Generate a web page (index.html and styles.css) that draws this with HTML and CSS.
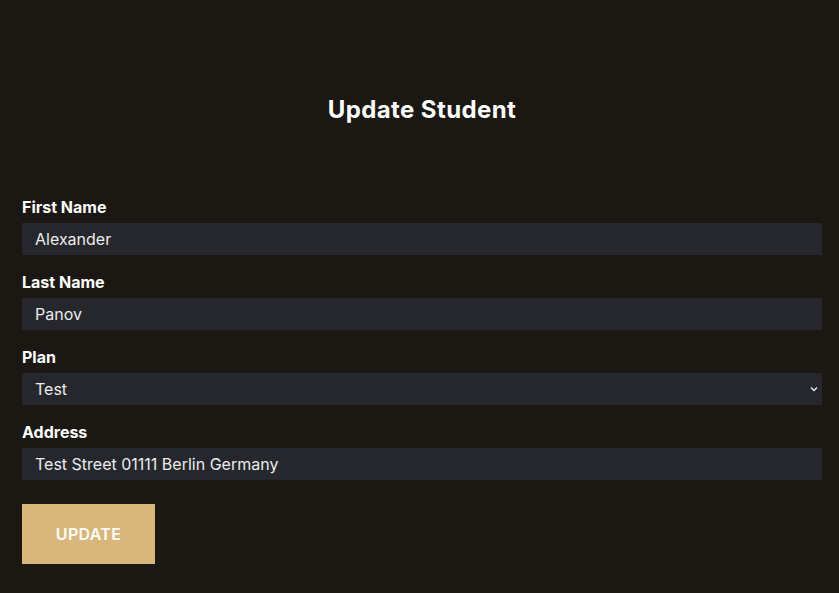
FILE: index.html
```html
<!DOCTYPE html>
<html lang="en">
<head>
<meta charset="utf-8">
<title>Update Student</title>
<link rel="stylesheet" href="styles.css">
</head>
<body>
<main class="page">
  <h1 class="title">Update Student</h1>
  <form class="form">
    <div class="field">
      <label class="label" for="first">First Name</label>
      <input class="input" id="first" type="text" value="Alexander">
    </div>
    <div class="field">
      <label class="label" for="last">Last Name</label>
      <input class="input" id="last" type="text" value="Panov">
    </div>
    <div class="field">
      <label class="label" for="plan">Plan</label>
      <div class="select-wrap">
        <select class="input select" id="plan">
          <option>Test</option>
        </select>
        <svg class="chevron" width="8" height="6" viewBox="0 0 8 6"><path d="M1 1.5 L4 4.5 L7 1.5" fill="none" stroke="#e6e6e6" stroke-width="1.5"/></svg>
      </div>
    </div>
    <div class="field">
      <label class="label" for="addr">Address</label>
      <input class="input" id="addr" type="text" value="Test Street 01111 Berlin Germany">
    </div>
    <button class="btn" type="button">UPDATE</button>
  </form>
</main>
</body>
</html>
```
FILE: styles.css
```css
html, body {
  margin: 0;
  padding: 0;
  background: #1b1814;
}
body {
  font-family: "Inter", "Roboto", "Liberation Sans", sans-serif;
  color: #ffffff;
}
.page {
  padding: 96px 17px 0 22px;
}
.title {
  margin: 0;
  text-align: center;
  font-size: 24px;
  font-weight: 700;
  line-height: 28px;
  letter-spacing: 0.4px;
}
.form {
  margin-top: 72px;
  display: flex;
  flex-direction: column;
}
.field {
  display: flex;
  flex-direction: column;
  margin-bottom: 16px;
}
.label {
  font-size: 16px;
  font-weight: 700;
  line-height: 22px;
  margin-bottom: 5px;
}
.input {
  box-sizing: border-box;
  width: 100%;
  height: 32px;
  border: none;
  outline: none;
  background: #25272c;
  color: #ececec;
  font-family: inherit;
  font-size: 16px;
  padding: 0 13px;
  margin: 0;
  border-radius: 0;
}
.select-wrap {
  position: relative;
}
.select {
  appearance: none;
  -webkit-appearance: none;
}
.chevron {
  position: absolute;
  right: 4px;
  top: 13px;
}
.btn {
  align-self: flex-start;
  margin-top: 8px;
  width: 133px;
  height: 60px;
  border: none;
  background: #d9b679;
  color: #ffffff;
  font-family: inherit;
  font-size: 16px;
  font-weight: 600;
  letter-spacing: 0.3px;
  cursor: pointer;
}
```
